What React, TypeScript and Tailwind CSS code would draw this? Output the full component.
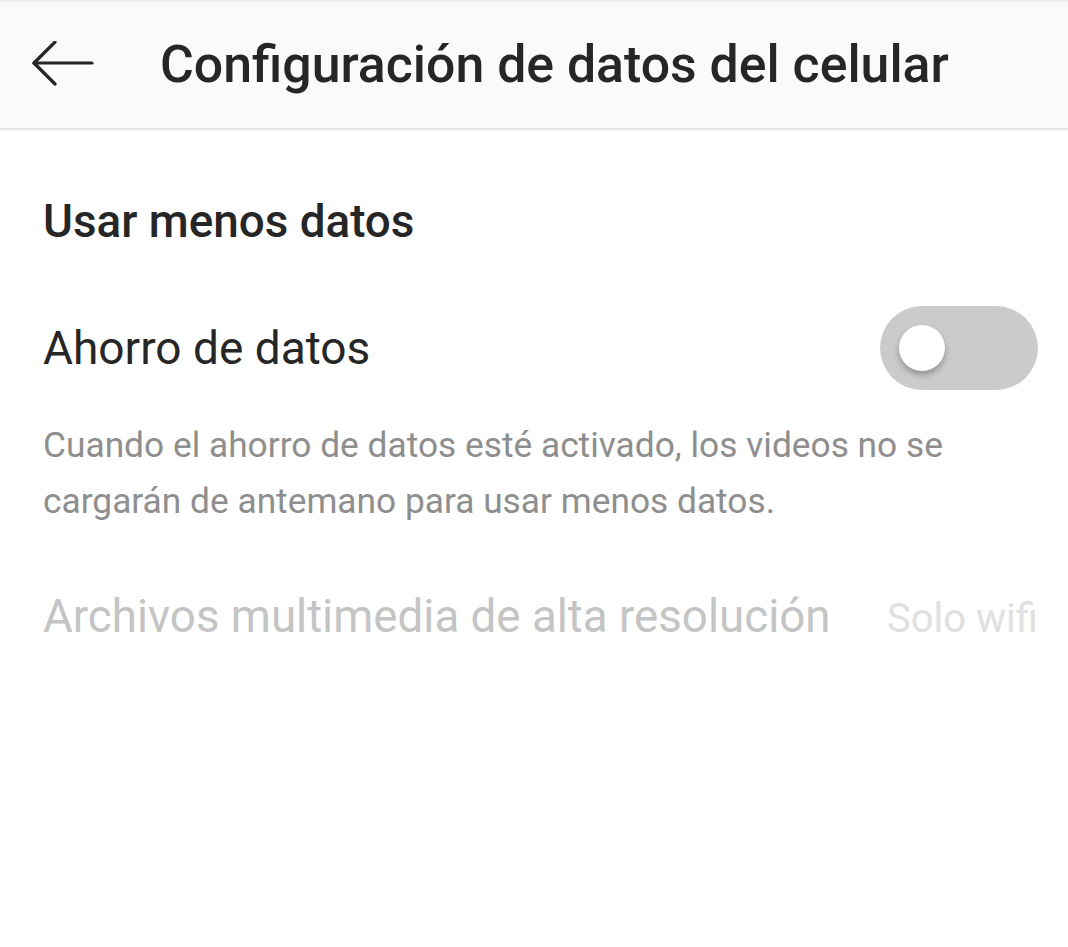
import React, { useState } from 'react';

const font = { fontFamily: 'Roboto, "Noto Sans", sans-serif' };

const BackArrow = () => (
  <svg width="64" height="48" viewBox="0 0 64 48" fill="none" stroke="#262626" strokeWidth="3.2" strokeLinecap="round" strokeLinejoin="round">
    <path d="M61 22H3" />
    <path d="M24 1L3 22L24 43" />
  </svg>
);

export default function App() {
  const [saver, setSaver] = useState(false);

  return (
    <div className="w-[1068px] h-[947px] bg-white overflow-hidden" style={font}>
      {/* Header */}
      <header className="h-[128px] bg-[#fafafa] border-t-2 border-[#ececec] shadow-[0_2px_2px_rgba(0,0,0,0.12)] flex items-center relative">
        <button className="ml-[31px] w-[64px] flex items-center">
          <BackArrow />
        </button>
        <h1 className="ml-[65px] text-[51.8px] leading-[60px] font-medium text-[#262626]">
          Configuración de datos del celular
        </h1>
      </header>

      <main className="pl-[43px] pr-[30px]">
        <h2 className="mt-[66px] text-[45.8px] font-medium text-[#262626] leading-[56px]">Usar menos datos</h2>

        <div className="mt-[56px] flex items-center justify-between">
          <span className="text-[46px] text-[#262626] leading-[56px]">Ahorro de datos</span>
          <button
            onClick={() => setSaver(!saver)}
            className="w-[158px] h-[84px] rounded-full bg-[#cacbcd] flex items-center px-[19px]"
          >
            <span className="w-[46px] h-[46px] rounded-full bg-white shadow-[0_4px_6px_rgba(0,0,0,0.28)]" />
          </button>
        </div>

        <p className="mt-[27px] text-[35.3px] leading-[56px] text-[#8e8e8e] max-w-[920px]">
          Cuando el ahorro de datos esté activado, los videos no se cargarán de antemano para usar menos datos.
        </p>

        <div className="mt-[60px] flex items-baseline justify-between whitespace-nowrap">
          <span className="text-[45.7px] text-[#c4c4c4] leading-[56px]">Archivos multimedia de alta resolución</span>
          <span className="text-[40px] text-[#e0e0e0] leading-[56px]">Solo wifi</span>
        </div>
      </main>
    </div>
  );
}
